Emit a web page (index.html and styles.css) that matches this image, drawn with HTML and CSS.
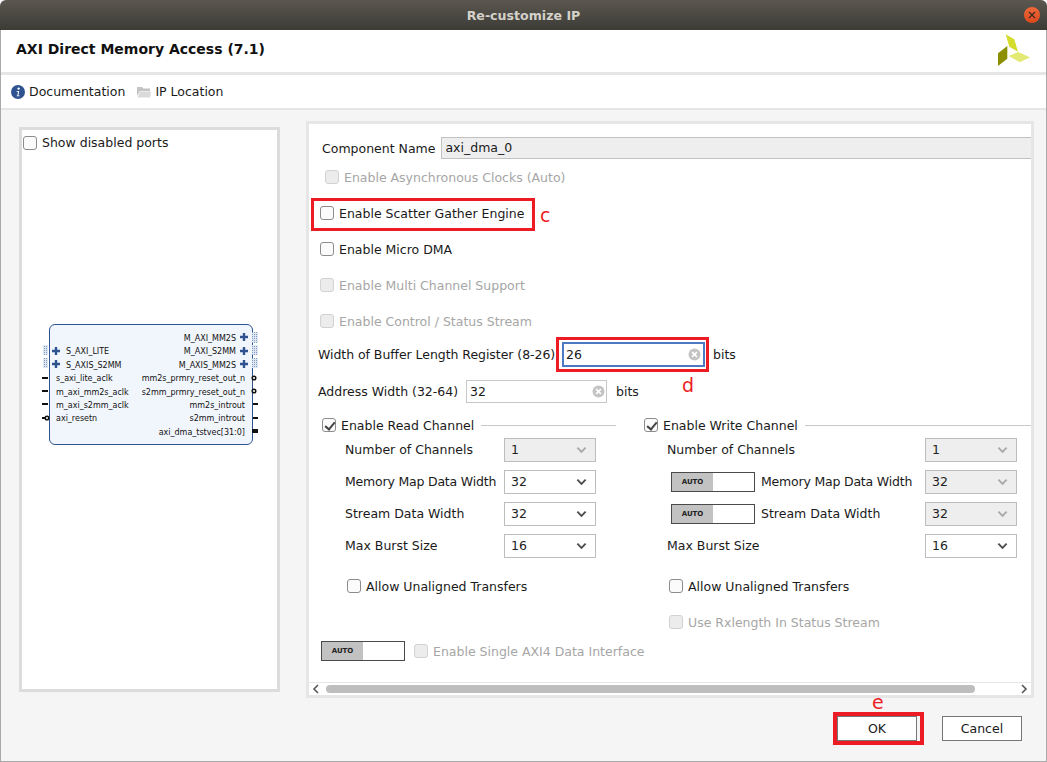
FILE: index.html
```html
<!DOCTYPE html>
<html>
<head>
    <title>Re-customize IP</title>
    <link rel="stylesheet" href="styles.css">
</head>
<body>
    <svg class="defs" width="0" height="0">
        <symbol id="chevron" viewBox="0 0 12 8">
            <path d="M1.5 1.5 L6 6 L10.5 1.5" fill="none" stroke="currentColor" stroke-width="2"/>
        </symbol>
        <symbol id="clear" viewBox="0 0 12 12">
            <circle cx="6" cy="6" r="5.5" fill="#c4c4c4"/>
            <path d="M3.8 3.8 L8.2 8.2 M8.2 3.8 L3.8 8.2" stroke="#fff" stroke-width="1.5"/>
        </symbol>
    </svg>

    <div class="window">
        <div class="titlebar">
            <span class="title">Re-customize IP</span>
            <span class="close">
                <svg width="10" height="10" viewBox="0 0 10 10"><path d="M2 2 L8 8 M8 2 L2 8" stroke="#3a2a20" stroke-width="1.2"/></svg>
            </span>
        </div>

        <div class="header">
            <h1>AXI Direct Memory Access (7.1)</h1>
            <svg class="logo" width="34" height="34" viewBox="0 0 34 34">
                <polygon points="7.7,0.3 16.3,5.3 20,17.7 11.3,12.7" fill="#d4dc2e"/>
                <polygon points="0,19.3 9.3,12 9.3,24.7 0,32" fill="#8b8f00"/>
                <polygon points="10.7,22 20,18 32,23.3 22,28.3" fill="#e3ea74"/>
            </svg>
        </div>

        <div class="toolbar">
            <span class="tool">
                <svg width="14" height="14" viewBox="0 0 14 14">
                    <circle cx="7" cy="7" r="7" fill="#2f5390"/>
                    <circle cx="7.6" cy="3.6" r="1.2" fill="#fff"/>
                    <path d="M5.6 6 H8.2 L7.4 10.4 H8.6 L8.4 11.2 H5.6 L5.8 10.4 H6.4 L7 6.8 H5.5 Z" fill="#fff"/>
                </svg>
                Documentation
            </span>
            <span class="tool">
                <svg width="14" height="14" viewBox="0 0 14 14">
                    <path d="M0 2 H5 L6.5 3.5 H13 V6 H3 L0 11 Z" fill="#c4c4c4"/>
                    <path d="M3 6.5 H14 L13 12.5 H0.5 Z" fill="#dadada"/>
                </svg>
                IP Location
            </span>
        </div>

        <div class="content">
            <div class="symbol-panel">
                <label class="check-row show-ports"><input type="checkbox"> Show disabled ports</label>
                <div class="ip-block">
                    <svg class="pins" width="223" height="130" viewBox="0 0 223 130">
                        <defs>
                            <pattern id="dots" width="2" height="2" patternUnits="userSpaceOnUse">
                                <rect width="2" height="2" fill="#dfe8f2"/>
                                <rect width="1" height="1" fill="#7f9dc2"/>
                            </pattern>
                        </defs>
                        <g fill="url(#dots)">
                            <rect x="-1" y="21" width="5" height="10"/>
                            <rect x="-1" y="34" width="5" height="10"/>
                            <rect x="208" y="8" width="6" height="11"/>
                            <rect x="208" y="21" width="6" height="10"/>
                            <rect x="208" y="34" width="6" height="10"/>
                        </g>
                        <g stroke="#2f5390" stroke-width="2.4" fill="none">
                            <path d="M8 27 H16 M12 23 V31"/>
                            <path d="M8 40 H16 M12 36 V44"/>
                            <path d="M196 13 H204 M200 9 V17"/>
                            <path d="M196 27 H204 M200 23 V31"/>
                            <path d="M196 40 H204 M200 36 V44"/>
                        </g>
                        <g stroke="#111" stroke-width="2">
                            <path d="M-2 54 H4 M-2 67 H4 M-2 80 H4 M-2 94 H1"/>
                            <path d="M209 80 H214 M209 94 H214"/>
                        </g>
                        <g fill="#fff" stroke="#111" stroke-width="1.5">
                            <circle cx="3" cy="94" r="1.8"/>
                            <circle cx="210" cy="54" r="1.8"/>
                            <circle cx="210" cy="67" r="1.8"/>
                        </g>
                        <rect x="208" y="105" width="6" height="4" fill="#111"/>
                    </svg>
                    <div class="port-row"><span></span><span class="bus-r">M_AXI_MM2S</span></div>
                    <div class="port-row"><span class="bus-l">S_AXI_LITE</span><span class="bus-r">M_AXI_S2MM</span></div>
                    <div class="port-row"><span class="bus-l">S_AXIS_S2MM</span><span class="bus-r">M_AXIS_MM2S</span></div>
                    <div class="port-row"><span>s_axi_lite_aclk</span><span>mm2s_prmry_reset_out_n</span></div>
                    <div class="port-row"><span>m_axi_mm2s_aclk</span><span>s2mm_prmry_reset_out_n</span></div>
                    <div class="port-row"><span>m_axi_s2mm_aclk</span><span>mm2s_introut</span></div>
                    <div class="port-row"><span>axi_resetn</span><span>s2mm_introut</span></div>
                    <div class="port-row"><span></span><span>axi_dma_tstvec[31:0]</span></div>
                </div>
            </div>

            <div class="config-panel">
                <div class="config-scroll">
                    <div class="name-row">
                        <span>Component Name</span>
                        <span class="name-field">axi_dma_0</span>
                    </div>
                    <label class="check-row disabled async-row"><input type="checkbox" disabled> Enable Asynchronous Clocks (Auto)</label>
                    <label class="check-row option-row"><input type="checkbox"> Enable Scatter Gather Engine</label>
                    <label class="check-row option-row"><input type="checkbox"> Enable Micro DMA</label>
                    <label class="check-row option-row disabled"><input type="checkbox" disabled> Enable Multi Channel Support</label>
                    <label class="check-row option-row disabled"><input type="checkbox" disabled> Enable Control / Status Stream</label>

                    <div class="bits-row buffer-row">
                        <span class="bits-label">Width of Buffer Length Register (8-26)</span>
                        <span class="text-field focused">26<svg class="clear-icon"><use href="#clear"/></svg></span>
                        <span>bits</span>
                    </div>
                    <div class="bits-row address-row">
                        <span class="bits-label">Address Width (32-64)</span>
                        <span class="text-field">32<svg class="clear-icon"><use href="#clear"/></svg></span>
                        <span>bits</span>
                    </div>

                    <div class="channels">
                        <div class="channel read-channel">
                            <div class="channel-head">
                                <label class="check-row"><input type="checkbox" checked> Enable Read Channel</label>
                                <span class="rule"></span>
                            </div>
                            <div class="field-row indent">
                                <span class="field-label">Number of Channels</span>
                                <span class="select disabled">1<svg class="chevron"><use href="#chevron"/></svg></span>
                            </div>
                            <div class="field-row indent">
                                <span class="field-label tight">Memory Map Data Width</span>
                                <span class="select">32<svg class="chevron"><use href="#chevron"/></svg></span>
                            </div>
                            <div class="field-row indent">
                                <span class="field-label">Stream Data Width</span>
                                <span class="select">32<svg class="chevron"><use href="#chevron"/></svg></span>
                            </div>
                            <div class="field-row indent">
                                <span class="field-label">Max Burst Size</span>
                                <span class="select">16<svg class="chevron"><use href="#chevron"/></svg></span>
                            </div>
                            <label class="check-row unaligned"><input type="checkbox"> Allow Unaligned Transfers</label>
                        </div>

                        <div class="channel write-channel">
                            <div class="channel-head">
                                <label class="check-row"><input type="checkbox" checked> Enable Write Channel</label>
                                <span class="rule"></span>
                            </div>
                            <div class="field-row indent">
                                <span class="field-label">Number of Channels</span>
                                <span class="select disabled">1<svg class="chevron"><use href="#chevron"/></svg></span>
                            </div>
                            <div class="field-row auto-indent">
                                <span class="auto-toggle"><span class="auto-on">AUTO</span></span>
                                <span class="field-label tight">Memory Map Data Width</span>
                                <span class="select disabled">32<svg class="chevron"><use href="#chevron"/></svg></span>
                            </div>
                            <div class="field-row auto-indent">
                                <span class="auto-toggle"><span class="auto-on">AUTO</span></span>
                                <span class="field-label">Stream Data Width</span>
                                <span class="select disabled">32<svg class="chevron"><use href="#chevron"/></svg></span>
                            </div>
                            <div class="field-row indent">
                                <span class="field-label">Max Burst Size</span>
                                <span class="select">16<svg class="chevron"><use href="#chevron"/></svg></span>
                            </div>
                            <label class="check-row unaligned"><input type="checkbox"> Allow Unaligned Transfers</label>
                            <label class="check-row unaligned rx-row disabled"><input type="checkbox" disabled> Use Rxlength In Status Stream</label>
                        </div>
                    </div>

                    <div class="single-row">
                        <span class="auto-toggle"><span class="auto-on">AUTO</span></span>
                        <label class="check-row disabled"><input type="checkbox" disabled> Enable Single AXI4 Data Interface</label>
                    </div>
                </div>

                <div class="scrollbar">
                    <svg width="8" height="10" viewBox="0 0 8 10"><path d="M6 1 L2 5 L6 9" fill="none" stroke="#555" stroke-width="1.6"/></svg>
                    <span class="scroll-track"><span class="scroll-thumb"></span></span>
                    <svg width="8" height="10" viewBox="0 0 8 10"><path d="M2 1 L6 5 L2 9" fill="none" stroke="#555" stroke-width="1.6"/></svg>
                </div>
            </div>
        </div>

        <div class="footer">
            <button class="btn">OK</button>
            <button class="btn">Cancel</button>
        </div>

        <!-- red markup drawn over the dialog -->
        <div class="mark box-c"></div>
        <div class="mark box-d"></div>
        <div class="mark box-e"></div>
        <span class="mark-letter letter-c">c</span>
        <span class="mark-letter letter-d">d</span>
        <span class="mark-letter letter-e">e</span>
    </div>
</body>
</html>
```

FILE: styles.css
```css
* {
    box-sizing: border-box;
}
body {
    margin: 0;
    background: #fff;
    font-family: "DejaVu Sans", sans-serif;
    font-size: 12.5px;
    color: #1a1a1a;
}
.defs {
    position: absolute;
}
.window {
    position: relative;
    width: 1047px;
    height: 762px;
    display: flex;
    flex-direction: column;
    overflow: hidden;
    background: #f5f5f5;
    border-radius: 6px 6px 0 0;
}
/* thin window frame below the title bar */
.window::after {
    content: "";
    position: absolute;
    left: 0;
    right: 0;
    top: 30px;
    bottom: 0;
    border: solid #aaa;
    border-width: 0 1px 1px;
    pointer-events: none;
}

/* title bar */
.titlebar {
    height: 30px;
    flex: none;
    display: flex;
    align-items: center;
    justify-content: center;
    background: linear-gradient(#5b574f, #3c3b36);
    position: relative;
}
.title {
    font-weight: bold;
    font-size: 12.6px;
    color: #d3d1ca;
}
.close {
    position: absolute;
    right: 7px;
    top: 7px;
    width: 16px;
    height: 16px;
    border-radius: 50%;
    background: linear-gradient(#f0693a, #d9481c);
    display: flex;
    align-items: center;
    justify-content: center;
}

/* header and toolbar */
.header {
    height: 45px;
    flex: none;
    background: #fff;
    border-bottom: 3px solid #e6e6e6;
    display: flex;
    align-items: flex-start;
    justify-content: space-between;
    padding: 0 16px;
}
.header h1 {
    margin: 11px 0 0;
    font-size: 14px;
    font-weight: bold;
    color: #111;
}
.logo {
    margin: 4px -1px 0 0;
}
.toolbar {
    height: 35px;
    flex: none;
    background: #fff;
    border-bottom: 2px solid #e6e6e6;
    display: flex;
    align-items: center;
    gap: 12px;
    padding: 0 0 0 11px;
}
.tool {
    display: flex;
    align-items: center;
    gap: 4px;
}

/* content */
.content {
    flex: none;
    height: 588px;
    display: flex;
    align-items: flex-start;
}
.symbol-panel {
    width: 261px;
    height: 565px;
    margin: 17px 0 0 19px;
    border: 3px solid #dcdcdc;
    background: #fff;
}
.show-ports {
    margin: 5px 0 0 1px;
}
.check-row {
    display: flex;
    align-items: center;
    gap: 5px;
    white-space: nowrap;
}
.check-row.disabled {
    color: #a6a6a6;
}
input[type="checkbox"] {
    appearance: none;
    flex: none;
    width: 14px;
    height: 14px;
    margin: 0;
    border: 1.5px solid #8c8c8c;
    border-radius: 3px;
    background: #fbfbfb;
    position: relative;
}
input[type="checkbox"]:disabled {
    border-color: #d2d2d2;
    background: #ececec;
}
input[type="checkbox"]:checked::after {
    content: "";
    position: absolute;
    left: 3.5px;
    top: 0.5px;
    width: 4px;
    height: 8px;
    border: solid #444;
    border-width: 0 2.5px 2.5px 0;
    transform: rotate(40deg);
}

/* ip symbol */
.ip-block {
    position: relative;
    width: 204px;
    height: 121px;
    margin: 174px 0 0 27px;
    padding: 7px 7px 0 6px;
    border: 1px solid #2f5390;
    border-radius: 6px;
    background: #f1f6fc;
    font-size: 8px;
    color: #111;
}
.pins {
    position: absolute;
    left: -6px;
    top: -1px;
    overflow: visible;
}
.port-row {
    height: 13.4px;
    line-height: 13.4px;
    display: flex;
    justify-content: space-between;
}
.port-row span {
    white-space: nowrap;
}
.bus-l {
    margin-left: 10px;
}
.bus-r {
    margin-right: 9px;
}

/* config form */
.config-panel {
    width: 728px;
    height: 577px;
    margin: 11px 0 0 26px;
    border: 3px solid #e6e6e6;
    background: #fff;
    display: flex;
    flex-direction: column;
}
.config-scroll {
    height: 558px;
    overflow: hidden;
    padding-top: 13px;
}
.name-row {
    height: 22px;
    display: flex;
    align-items: center;
    margin-left: 13px;
    gap: 6px;
}
.name-field {
    flex: 1;
    height: 22px;
    line-height: 20px;
    padding-left: 3px;
    margin-right: -3px;
    background: #eee;
    border: solid #c2c2c2;
    border-width: 1px 0 1px 1px;
}
.async-row {
    height: 22px;
    margin: 7px 0 0 16px;
}
.async-row + .option-row {
    margin-top: 7px;
}
.option-row {
    height: 36px;
    margin-left: 11px;
}
.bits-row {
    display: flex;
    align-items: center;
    margin-left: 9px;
    white-space: nowrap;
}
.buffer-row {
    height: 25px;
    margin-top: 3px;
}
.buffer-row .bits-label {
    width: 244px;
    letter-spacing: -0.05px;
}
.address-row {
    height: 23px;
    margin-top: 13px;
}
.address-row .bits-label {
    width: 148px;
}
.text-field {
    position: relative;
    width: 141px;
    height: 23px;
    line-height: 21px;
    padding-left: 3px;
    margin-right: 9px;
    border: 1px solid #c8c8c8;
}
.focused {
    width: 143px;
    height: 25px;
    border: 2px solid #4c78c4;
    padding-left: 2px;
    margin-right: 8px;
}
.clear-icon {
    position: absolute;
    right: 1px;
    top: 4px;
    width: 13px;
    height: 13px;
}
.focused .clear-icon {
    right: 2px;
    top: 4px;
}

/* channels */
.channels {
    display: flex;
    margin-top: 12px;
    height: 217px;
}
.channel {
    flex: none;
}
.read-channel {
    width: 335px;
    padding-left: 13px;
}
.write-channel {
    width: 387px;
}
.channel-head {
    height: 20px;
    display: flex;
    align-items: center;
    gap: 7px;
    margin-bottom: 3px;
}
.rule {
    flex: 1;
    height: 1px;
    background: #c8c8c8;
}
.read-channel .rule {
    margin-right: 28px;
}
.field-row {
    position: relative;
    height: 24px;
    margin-bottom: 8px;
    display: flex;
    align-items: center;
    white-space: nowrap;
}
.field-label {
    padding-bottom: 2px;
}
.tight {
    letter-spacing: -0.2px;
}
.indent {
    padding-left: 23px;
}
.auto-indent {
    padding-left: 27px;
}
.select {
    position: absolute;
    top: 0;
    width: 92px;
    height: 24px;
    line-height: 22px;
    padding-left: 6px;
    border: 1px solid #bdbdbd;
    background: #fff;
    color: #222;
}
.read-channel .select {
    left: 182px;
}
.write-channel .select {
    left: 281px;
}
.select.disabled {
    background: #eee;
}
.chevron {
    position: absolute;
    right: 8px;
    top: 7px;
    width: 11px;
    height: 8px;
    color: #4a4a4a;
}
.disabled .chevron {
    color: #a8a8a8;
}
.unaligned {
    height: 20px;
    margin: 18px 0 0 25px;
}
.rx-row {
    margin-top: 16px;
}
.auto-toggle {
    flex: none;
    width: 84px;
    height: 20px;
    display: block;
    background: #fff;
    border: 1.5px solid #4a4a4a;
    margin-right: 6px;
}
.auto-on {
    display: block;
    width: 41px;
    height: 100%;
    background: #c2c2c2;
    font-size: 7px;
    font-weight: bold;
    line-height: 19px;
    text-align: center;
    color: #222;
}
.single-row {
    display: flex;
    align-items: center;
    height: 20px;
    margin: 9px 0 0 12px;
    gap: 3px;
}

/* horizontal scrollbar */
.scrollbar {
    height: 13px;
    flex: none;
    border-top: 1px solid #e6e6e6;
    display: flex;
    align-items: center;
    gap: 3px;
    padding: 0 3px;
}
.scroll-track {
    flex: 1;
    height: 8px;
    padding-left: 3px;
}
.scroll-thumb {
    display: block;
    width: 649px;
    height: 8px;
    border-radius: 4px;
    background: #bebebe;
}

/* footer */
.footer {
    flex: 1;
    display: flex;
    justify-content: flex-end;
    align-items: flex-start;
    gap: 25px;
    padding: 18px 25px 0 0;
}
.btn {
    width: 80px;
    height: 25px;
    background: #fff;
    border: 1px solid #777;
    border-radius: 0;
    font: 12.5px "DejaVu Sans", sans-serif;
    color: #1a1a1a;
    padding: 0;
}

/* red annotations */
.mark {
    position: absolute;
    border: 3px solid #ed1c24;
}
.box-c {
    left: 311px;
    top: 198px;
    width: 224px;
    height: 33px;
}
.box-d {
    left: 556px;
    top: 337px;
    width: 153px;
    height: 35px;
}
.box-e {
    left: 833px;
    top: 712px;
    width: 91px;
    height: 33px;
    border-width: 4px;
}
.mark-letter {
    position: absolute;
    font-size: 19px;
    line-height: 20px;
    color: #ed1c24;
}
.letter-c {
    left: 540px;
    top: 205px;
}
.letter-d {
    left: 682px;
    top: 375px;
}
.letter-e {
    left: 872px;
    top: 692px;
}
```
